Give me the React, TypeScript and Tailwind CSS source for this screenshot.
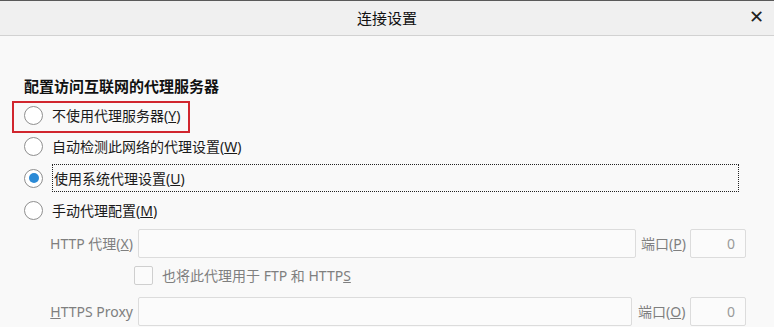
import React from "react";

const font = { fontFamily: '"Noto Sans", "Noto Sans CJK SC", sans-serif' };

function Radio({ checked = false }: { checked?: boolean }) {
  return (
    <div className="w-[19px] h-[19px] rounded-full border border-[#8f8f8f] bg-white flex items-center justify-center shrink-0">
      {checked && <div className="w-[10px] h-[10px] rounded-full bg-[#2b8ad6]" />}
    </div>
  );
}

export default function App() {
  return (
    <div className="w-[774px] h-[327px] overflow-hidden bg-[#f9f9f9] text-[#1a1a1a]" style={font}>
      <div className="h-[1px] bg-[#5a5a5a]" />
      <div className="h-[35px] bg-[#f0f0f0] border-b border-[#d2d2d2] flex items-center justify-center relative">
        <span className="text-[15px] text-[#111]">连接设置</span>
        <span className="absolute right-[10px] top-[6px] text-[18px] leading-none text-[#222]">✕</span>
      </div>
      <div className="pl-[24px] pt-[38px]">
        <div className="text-[15px] font-bold leading-[24px] text-[#111]">配置访问互联网的代理服务器</div>
        <div className="relative mt-[1px]">
          <div className="absolute left-[-12px] top-[2px] w-[178px] h-[32px] border-2 border-[#d1262e]" />
          <div className="flex flex-col">
            <div className="h-[31px] flex items-center gap-[9px] mt-[1px]">
              <Radio />
              <span className="text-[14px]">不使用代理服务器(<u>Y</u>)</span>
            </div>
            <div className="h-[31px] flex items-center gap-[9px]">
              <Radio />
              <span className="text-[14px]">自动检测此网络的代理设置(<u>W</u>)</span>
            </div>
            <div className="h-[32px] flex items-center gap-[9px]">
              <Radio checked />
              <span className="text-[14px] flex-1 mr-[35px] h-[28px] flex items-center border border-dotted border-[#222] pl-[1px]">使用系统代理设置(<u>U</u>)</span>
            </div>
            <div className="h-[32px] flex items-center gap-[9px]">
              <Radio />
              <span className="text-[14px]">手动代理配置(<u>M</u>)</span>
            </div>
          </div>
        </div>
        <div className="text-[14px] text-[#7f7f7f]">
          <div className="flex items-center h-[30px] mt-[2px]">
            <span className="w-[114px] text-right pr-[5px]">HTTP 代理(<u>X</u>)</span>
            <div className="w-[498px] h-[29px] border border-[#dcdcdc] bg-[#fbfbfb] rounded-[2px]" />
            <span className="w-[54px] pl-[5px]">端口(<u>P</u>)</span>
            <div className="w-[56px] h-[29px] border border-[#dcdcdc] bg-[#fbfbfb] rounded-[2px] text-right pr-[10px] leading-[27px] text-[#9a9a9a]">0</div>
          </div>
          <div className="flex items-center h-[38px] pb-[4px] pl-[110px] gap-[9px]">
            <div className="w-[19px] h-[19px] border border-[#cfcfcf] bg-[#fbfbfb] rounded-[2px]" />
            <span>也将此代理用于 FTP 和 HTTP<u>S</u></span>
          </div>
          <div className="flex items-center h-[30px]">
            <span className="w-[114px] text-right pr-[5px]"><u>H</u>TTPS Proxy</span>
            <div className="w-[494px] h-[29px] border border-[#dcdcdc] bg-[#fbfbfb] rounded-[2px]" />
            <span className="w-[58px] pl-[6px]">端口(<u>O</u>)</span>
            <div className="w-[56px] h-[29px] border border-[#dcdcdc] bg-[#fbfbfb] rounded-[2px] text-right pr-[10px] leading-[27px] text-[#9a9a9a]">0</div>
          </div>
        </div>
      </div>
    </div>
  );
}
